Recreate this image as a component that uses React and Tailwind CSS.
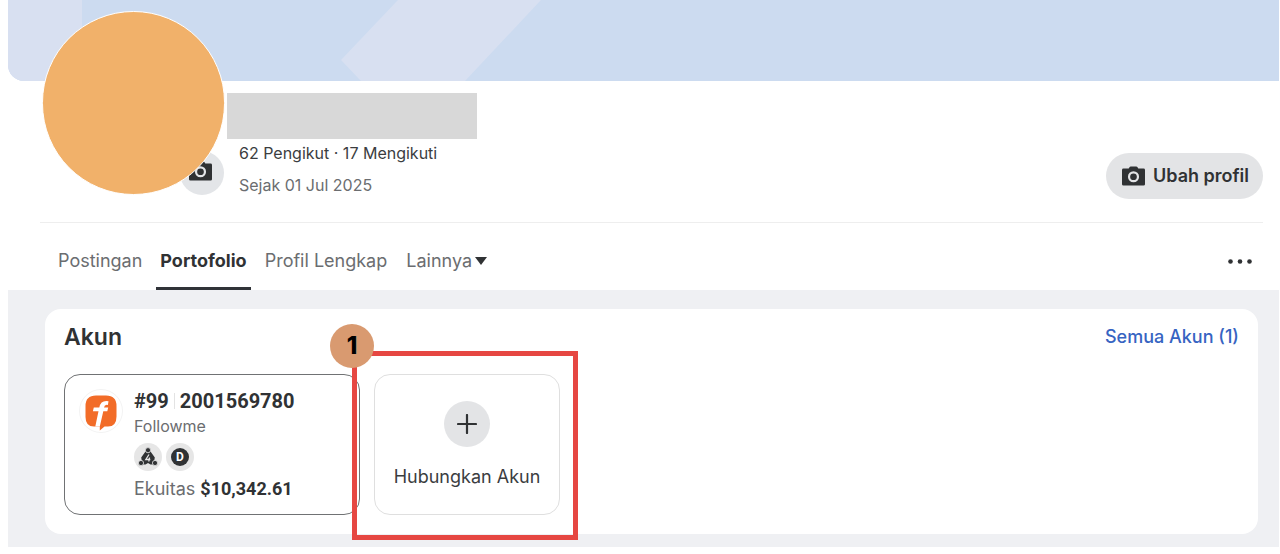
const tabs = [
  { label: 'Postingan', active: false },
  { label: 'Portofolio', active: true },
  { label: 'Profil Lengkap', active: false }
];

const CameraIcon = ({ className }) => (
  <svg className={className} viewBox="0 0 24 20" fill="currentColor" fillRule="evenodd" aria-hidden="true">
    <path d="M5.500 2.200H7L7.800.8Q8.200 0 9.200 0H14.800Q15.800 0 16.200.8L17 2.200H22.500Q24 2.200 24 3.700V18.500Q24 20 22.500 20H1.500Q0 20 0 18.500V3.700Q0 2.200 1.500 2.200ZM12 5a5.800 5.800 0 1 0 0 11.600a5.800 5.800 0 1 0 0-11.600ZM12 7.300a3.500 3.500 0 1 1 0 7a3.500 3.500 0 1 1 0-7Z" />
  </svg>
);

const BannerArt = () => (
  <svg className="block h-full w-full" viewBox="0 0 1271 81" preserveAspectRatio="xMinYMin slice" aria-hidden="true">
    <rect width="1271" height="81" fill="#ccdbf0" />
    <path d="M0 0H74V42L35 81H0Z" fill="#d8e0f1" />
    <path d="M390 0H533L457 81H353L333 60Z" fill="#d8e0f1" />
  </svg>
);

const BrokerLogo = () => (
  <svg className="h-11 w-11" viewBox="0 0 44 44" aria-hidden="true">
    <circle cx="22" cy="22" r="21.500" fill="#fff" stroke="#f3f3f3" />
    <path d="M17 6.500H27Q37.500 6.500 37.500 17V27.500Q37.500 37.500 29 37.500H25.500L20.800 41.500V37.500H15Q6.500 37.500 6.500 28V17Q6.500 6.500 17 6.500Z" fill="#f26c28" />
    <path d="M29.500 12.200Q21.700 10.900 20.300 18.500H14.800L13.900 22.200H19.500L16.300 37.500H20.800L24.300 22.200H28.300L29.200 18.500H25Q25.600 15.200 28.900 16Z" fill="#fff" />
  </svg>
);

const PlatformIcon = () => (
  <svg className="h-5 w-5" viewBox="0 0 20 20" aria-hidden="true">
    <path d="M7.500 4.500H12.500L16.800 10.500 15.500 17.500H12.500L10 16 7.500 17.500H4.500L3.200 10.500Z" fill="#303234" />
    <circle cx="10" cy="3.200" r="2.600" fill="#303234" stroke="#e6e6e6" strokeWidth=".8" />
    <circle cx="3" cy="16" r="2.600" fill="#303234" stroke="#e6e6e6" strokeWidth=".8" />
    <circle cx="17" cy="16" r="2.600" fill="#303234" stroke="#e6e6e6" strokeWidth=".8" />
    <path d="M11 7.500 7.800 12.500H12.300M11.500 10.500 10.800 14.500" fill="none" stroke="#e6e6e6" strokeWidth="1.300" />
  </svg>
);

const ProfileHeader = () => (
  <header>
    <div className="h-[81px] overflow-hidden rounded-bl-2xl">
      <BannerArt />
    </div>
    <div className="ml-8 mr-4 flex border-b border-[#eeeeee] pb-[25px]">
      <div className="relative z-10 -mt-[70px] h-[184px] w-[184px] shrink-0">
        <button type="button" aria-label="Ubah foto" className="absolute bottom-0 right-0 flex h-11 w-11 items-center justify-center rounded-full bg-[#e3e5e8] pb-1 pr-1 text-[#2f3133]">
          <CameraIcon className="h-5 w-[23px]" />
        </button>
        <div className="absolute inset-0 ml-[2px] -mr-px rounded-full border border-white bg-[#f1b16a]" />
      </div>
      <div className="ml-[3px] flex-1 pt-3">
        <div className="h-[46px] w-[250px] bg-[#d8d8d8]" />
        <p className="ml-3 mt-[2px] text-base leading-6 text-[#3b3d3f]">62 Pengikut · 17 Mengikuti</p>
        <p className="ml-3 mt-2 text-base leading-6 text-[#6b6d70]">Sejak 01 Jul 2025</p>
      </div>
      <button type="button" className="-mb-[2px] flex h-[46px] items-center gap-2 self-end rounded-full bg-[#e3e4e6] pl-4 pr-[14px] text-lg font-semibold text-[#303234]">
        <CameraIcon className="h-5 w-[23px]" />
        Ubah profil
      </button>
    </div>
  </header>
);

const ProfileTabs = () => (
  <nav className="flex h-[67px] items-stretch pl-[46px] pr-[27px] text-lg">
    {tabs.map((tab) => (
      <a
        key={tab.label}
        href="#"
        className={
          tab.active
            ? 'flex items-center border-b-3 border-[#303338] px-1 pb-px pt-3 font-bold text-[#303234]'
            : 'flex items-center px-[14px] pb-1 pt-3 text-[#6b6d70] first:pl-1'
        }
      >
        {tab.label}
      </a>
    ))}
    <button type="button" className="ml-[5px] flex items-center gap-[3px] pb-1 pt-3 text-[#6b6d70]">
      Lainnya
      <svg className="h-2 w-3" viewBox="0 0 12 8" aria-hidden="true">
        <path d="M0 0H12L6 8Z" fill="#303234" />
      </svg>
    </button>
    <button type="button" aria-label="Opsi lain" className="ml-auto flex items-center pt-[10px]">
      <svg className="h-[5px] w-6" viewBox="0 0 24 5" fill="#303234" aria-hidden="true">
        <circle cx="2.500" cy="2.500" r="2.300" />
        <circle cx="12" cy="2.500" r="2.300" />
        <circle cx="21.500" cy="2.500" r="2.300" />
      </svg>
    </button>
  </nav>
);

const AccountCard = () => (
  <article className="flex h-[141px] w-[296px] gap-[11px] rounded-2xl border border-[#707274] pl-[14px] pt-[14px]">
    <BrokerLogo />
    <div>
      <div className="flex items-center gap-[5px] font-['Roboto',sans-serif] text-xl font-bold leading-6 text-[#303234]">
        <span>#99</span>
        <span className="h-4 w-px bg-[#e3e3e3]" />
        <span>2001569780</span>
      </div>
      <p className="text-base leading-[26px] text-[#6b6d70]">Followme</p>
      <div className="mt-1 flex gap-1">
        <span className="flex h-7 w-7 items-center justify-center rounded-full bg-[#e6e6e6]">
          <PlatformIcon />
        </span>
        <span className="flex h-7 w-7 items-center justify-center rounded-full bg-[#e6e6e6]">
          <span className="flex h-[18px] w-[18px] items-center justify-center rounded-full bg-[#303234] font-['Roboto',sans-serif] text-xs font-bold text-white">D</span>
        </span>
      </div>
      <p className="mt-1 text-lg leading-7 text-[#6b6d70]">
        Ekuitas <span className="font-['Roboto',sans-serif] font-bold text-[#303234]">$10,342.61</span>
      </p>
    </div>
  </article>
);

const ConnectAccount = () => (
  <div className="relative">
    <button type="button" className="flex h-[141px] w-[186px] flex-col items-center rounded-2xl border border-[#dfdfdf] pt-[26px] text-lg text-[#3b3d3f]">
      <span className="flex h-[46px] w-[46px] items-center justify-center rounded-full bg-[#e3e4e6]">
        <svg className="h-5 w-5" viewBox="0 0 20 20" fill="none" stroke="#303234" strokeWidth="2.200" strokeLinecap="round" aria-hidden="true">
          <path d="M10 1V19M1 10H19" />
        </svg>
      </span>
      <span className="mt-4 leading-7">Hubungkan Akun</span>
    </button>
    <div className="pointer-events-none absolute -bottom-[25px] -left-[22px] -right-[18px] -top-[23px] border-[5px] border-[#e64742]">
      <span className="absolute -left-[27px] -top-8 flex h-11 w-11 items-center justify-center rounded-full bg-[#d99a70] font-['Inter',sans-serif] text-2xl font-extrabold text-black">1</span>
    </div>
  </div>
);

const App = () => (
  <div className="bg-white pb-[7px] pl-2 pr-px font-['Inter',sans-serif]">
    <ProfileHeader />
    <ProfileTabs />
    <main className="bg-[#eff0f3] pb-[13px] pl-[37px] pr-[21px] pt-[19px]">
      <section className="rounded-2xl bg-white px-[19px] pb-[19px] pt-3">
        <div className="flex items-center justify-between">
          <h2 className="text-[23px] font-semibold leading-8 text-[#303234]">Akun</h2>
          <a href="#" className="text-lg font-medium text-[#3664c2]">Semua Akun (1)</a>
        </div>
        <div className="mt-[21px] flex gap-[14px]">
          <AccountCard />
          <ConnectAccount />
        </div>
      </section>
    </main>
  </div>
);

export default App;
